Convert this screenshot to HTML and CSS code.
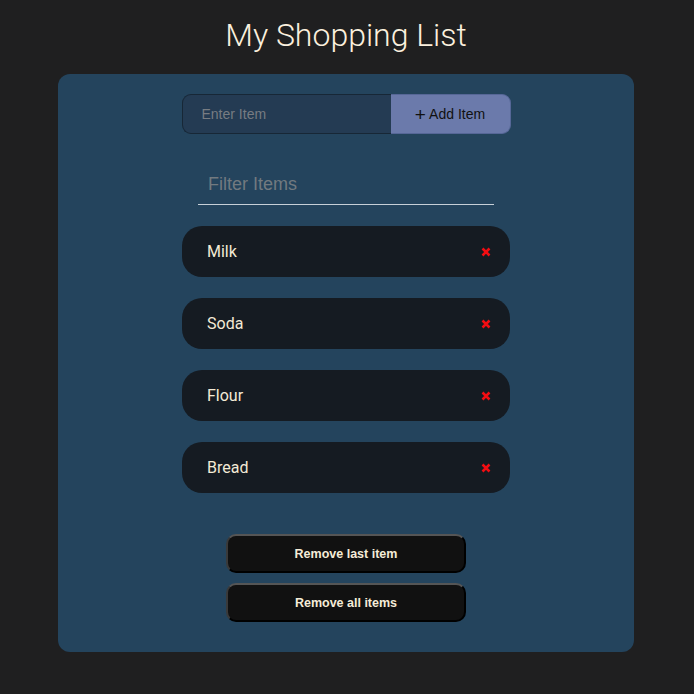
FILE: index.html
```html
<!DOCTYPE html>
<html lang="en">
<head>
<meta charset="utf-8">
<title>My Shopping List</title>
<link rel="stylesheet" href="styles.css">
</head>
<body>
<h1 class="title">My Shopping List</h1>
<main class="card">
  <form class="add-form">
    <input class="item-input" type="text" placeholder="Enter Item">
    <button class="add-btn" type="button"><span class="plus">+</span> Add Item</button>
  </form>
  <input class="filter" type="text" placeholder="Filter Items">
  <ul class="items">
    <li class="item"><span>Milk</span><svg class="x" viewBox="0 0 10 10" width="10" height="10"><path d="M1.5 1.5 L8.5 8.5 M8.5 1.5 L1.5 8.5" stroke="#f20d12" stroke-width="2.5" stroke-linecap="butt"/></svg></li>
    <li class="item"><span>Soda</span><svg class="x" viewBox="0 0 10 10" width="10" height="10"><path d="M1.5 1.5 L8.5 8.5 M8.5 1.5 L1.5 8.5" stroke="#f20d12" stroke-width="2.5" stroke-linecap="butt"/></svg></li>
    <li class="item"><span>Flour</span><svg class="x" viewBox="0 0 10 10" width="10" height="10"><path d="M1.5 1.5 L8.5 8.5 M8.5 1.5 L1.5 8.5" stroke="#f20d12" stroke-width="2.5" stroke-linecap="butt"/></svg></li>
    <li class="item"><span>Bread</span><svg class="x" viewBox="0 0 10 10" width="10" height="10"><path d="M1.5 1.5 L8.5 8.5 M8.5 1.5 L1.5 8.5" stroke="#f20d12" stroke-width="2.5" stroke-linecap="butt"/></svg></li>
  </ul>
  <div class="actions">
    <button class="action-btn" type="button">Remove last item</button>
    <button class="action-btn" type="button">Remove all items</button>
  </div>
</main>
</body>
</html>
```
FILE: styles.css
```css
* { box-sizing: border-box; }
html, body { margin: 0; padding: 0; }
body {
  background: #1f1f20;
  font-family: Roboto, "Liberation Sans", sans-serif;
  color: #f6eedc;
  height: 694px;
  overflow: hidden;
  padding-right: 2px;
}
.title {
  margin: 16px 0 20px;
  line-height: 38px;
  font-size: 32px;
  font-weight: 300;
  text-align: center;
  color: #fbf0de;
}
.card {
  width: 576px;
  margin: 0 auto;
  background: #24445d;
  border-radius: 12px;
  padding: 20px 0 30px;
  display: flex;
  flex-direction: column;
  align-items: center;
}
.add-form {
  display: flex;
  width: 329px;
  height: 40px;
  margin: 0;
}
.item-input {
  width: 209px;
  height: 40px;
  background: #243b53;
  border: 1px solid #172736;
  border-right: none;
  border-radius: 9px 0 0 9px;
  padding: 0 0 0 19px;
  font-family: "Liberation Sans", Arial, sans-serif;
  font-size: 14px;
  color: #ddd;
  outline: none;
}
.item-input::placeholder { color: #777c82; }
.add-btn {
  width: 120px;
  height: 40px;
  background: #6b7aab;
  border: 1px solid #566797;
  border-left: none;
  border-radius: 0 9px 9px 0;
  font-family: "Liberation Sans", Arial, sans-serif;
  font-size: 14px;
  color: #111;
  padding: 0;
}
.plus { font-size: 19px; line-height: 1; vertical-align: -2px; }
.filter {
  width: 296px;
  height: 44px;
  margin-top: 27px;
  background: transparent;
  border: none;
  border-bottom: 1px solid #c7d0d8;
  padding: 4px 0 0 10px;
  font-family: "Liberation Sans", Arial, sans-serif;
  font-size: 18px;
  color: #ddd;
  outline: none;
}
.filter::placeholder { color: #727a80; }
.items {
  list-style: none;
  margin: 21px 0 0;
  padding: 0;
  display: flex;
  flex-direction: column;
  gap: 21px;
}
.item {
  width: 328px;
  height: 51px;
  background: #151b22;
  border-radius: 20px;
  display: flex;
  align-items: center;
  justify-content: space-between;
  padding: 0 19px 0 25px;
  font-size: 16px;
  color: #f3ead6;
}
.x { display: block; }
.actions {
  margin-top: 41px;
  display: flex;
  flex-direction: column;
  gap: 10px;
}
.action-btn {
  width: 240px;
  height: 39px;
  background: #111111;
  border: 2px solid;
  border-color: #555555 #000000 #000000 #3a3a3a;
  border-radius: 10px;
  font-family: "Liberation Sans", Arial, sans-serif;
  font-weight: 700;
  font-size: 12.5px;
  color: #f5ecd8;
  padding: 0;
}
```
